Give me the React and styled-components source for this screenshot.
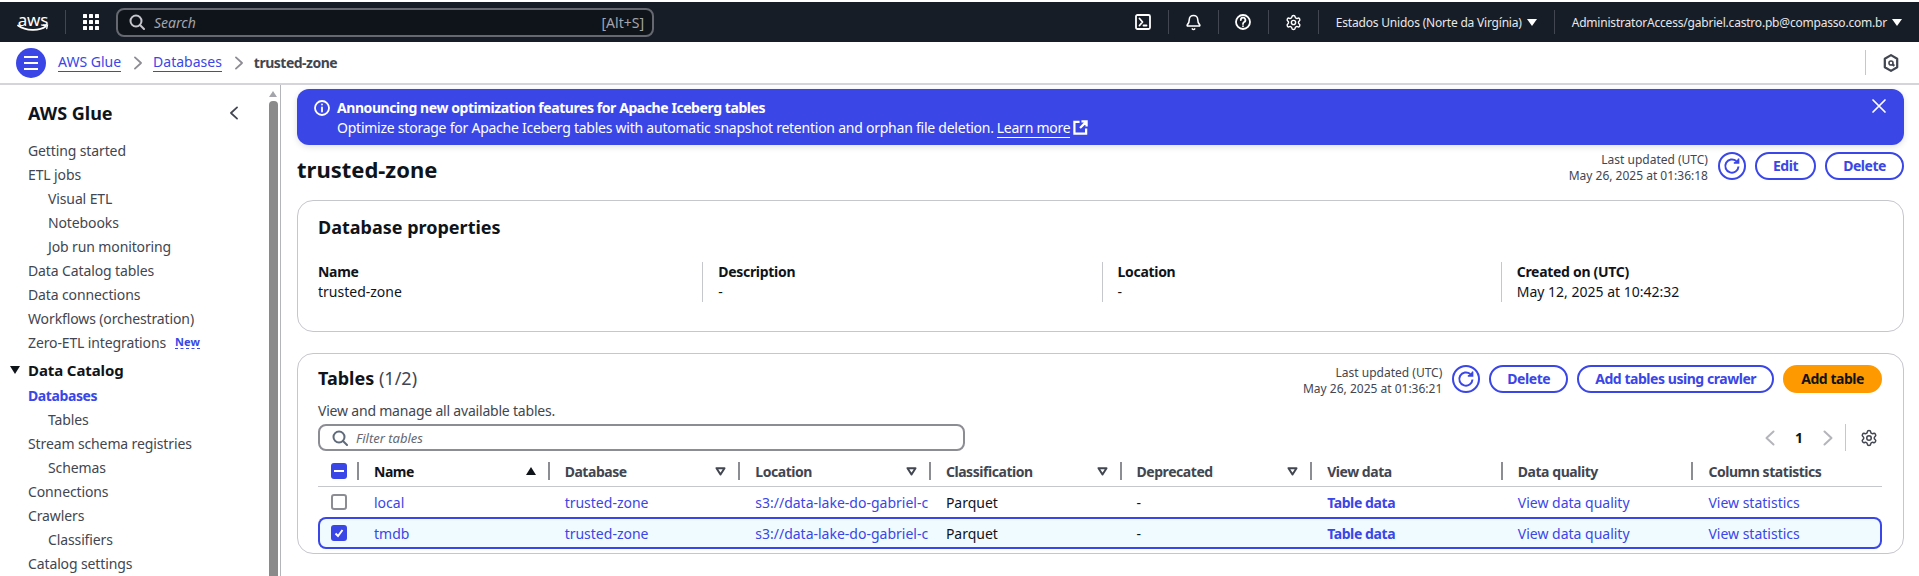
import React from 'react';
import styled, { createGlobalStyle } from 'styled-components';
import { Bell, Settings } from 'lucide-react';

const BLUE = '#3a46e6';
const TEXT = '#424650';
const DARK = '#0f141a';

const GlobalStyle = createGlobalStyle`
  html, body {
    margin: 0;
    height: 100%;
    overflow: hidden;
    background: #fff;
  }
  body {
    font-family: "Noto Sans", "Open Sans", sans-serif;
    font-size: 14px;
    color: ${DARK};
  }
`;

const Page = styled.div`
  display: flex;
  flex-direction: column;
  height: 100vh;
  overflow: hidden;
`;

const TopNav = styled.header`
  display: flex;
  align-items: center;
  flex: none;
  height: 40px;
  margin-top: 2px;
  padding-left: 17px;
  background: #161d26;
  color: #fff;
  box-sizing: border-box;
`;

const LogoBox = styled.div`
  position: relative;
  width: 32px;
  height: 22px;
  flex: none;
`;

const LogoText = styled.span`
  display: block;
  font-size: 17px;
  line-height: 17px;
  letter-spacing: -0.2px;
  text-align: center;
  color: #fff;
`;

const LogoSmile = styled.svg`
  position: absolute;
  left: 0;
  bottom: 0;
`;

const NavSep = styled.span`
  flex: none;
  width: 1px;
  height: 24px;
  background: #424650;
  margin: ${(p) => p.$margin || '0'};
`;

const GridIcon = styled.div`
  display: grid;
  grid-template-columns: repeat(3, 4px);
  gap: 2px;
  flex: none;
  margin-right: 17px;

  span {
    width: 4px;
    height: 4px;
    background: #fff;
    border-radius: 0.5px;
  }
`;

const SearchBox = styled.div`
  display: flex;
  align-items: center;
  flex: none;
  width: 538px;
  height: 29px;
  box-sizing: border-box;
  padding: 0 8px 0 11px;
  background: #0f141a;
  border: 2px solid #656871;
  border-radius: 8px;
  color: #c6c6cd;
  font-size: 14px;
`;

const SearchHint = styled.span`
  flex: 1;
  margin-left: 9px;
  font-style: italic;
  color: #a4a4ad;
`;

const SearchKeys = styled.span`
  color: #a4a4ad;
  font-size: 14px;
`;

const NavRight = styled.div`
  display: flex;
  align-items: center;
  margin-left: auto;
  padding-right: 17px;
`;

const NavIcon = styled.div`
  display: flex;
  align-items: center;
  justify-content: center;
  width: 49px;
  height: 24px;
  border-right: 1px solid #424650;
  color: #fff;
`;

const NavMenu = styled.div`
  display: flex;
  align-items: center;
  gap: 5px;
  height: 24px;
  padding-left: 17px;
  padding-right: ${(p) => (p.$last ? '0' : '17px')};
  font-size: 12px;
  letter-spacing: -0.2px;
  color: #e8e8ea;
  border-right: ${(p) => (p.$last ? '0' : '1px solid #424650')};
`;

const Caret = styled.span`
  width: 0;
  height: 0;
  border-left: 5px solid transparent;
  border-right: 5px solid transparent;
  border-top: 7px solid #fff;
  flex: none;
`;

const CrumbBar = styled.div`
  display: flex;
  align-items: center;
  flex: none;
  height: 43px;
  box-sizing: border-box;
  padding: 0 19px 0 16px;
  border-bottom: 2px solid #d4d4da;
`;

const MenuButton = styled.div`
  display: flex;
  flex-direction: column;
  align-items: center;
  justify-content: center;
  gap: 4px;
  width: 30px;
  height: 30px;
  border-radius: 50%;
  background: ${BLUE};
  margin-right: 12px;

  span {
    width: 14px;
    height: 2px;
    background: #fff;
  }
`;

const Crumb = styled.a`
  color: ${BLUE};
  font-size: 14px;
  text-decoration: none;
  border-bottom: 1px solid ${BLUE};
  line-height: 18px;
`;

const CrumbSep = styled.span`
  display: flex;
  margin: 0 8px 0 10px;
`;

const CrumbCurrent = styled.span`
  color: ${TEXT};
  font-weight: 700;
  font-size: 14px;
  letter-spacing: -0.5px;
`;

const CrumbTools = styled.div`
  display: flex;
  align-items: center;
  margin-left: auto;
  height: 25px;
  padding-left: 16px;
  border-left: 1px solid #c6c6cd;
  color: #424650;
`;

const Body = styled.div`
  display: flex;
  flex: 1;
  min-height: 0;
`;

const Sidebar = styled.aside`
  display: flex;
  flex: none;
  width: 281px;
  box-sizing: border-box;
  border-right: 1px solid #b4b4bb;
  padding-right: 2px;
  overflow: hidden;
`;

const SideContent = styled.nav`
  flex: 1;
  padding: 16px 27px 0 28px;
  min-width: 0;
`;

const SideTitleRow = styled.div`
  display: flex;
  align-items: center;
  justify-content: space-between;
  height: 24px;
  margin-bottom: 13px;
`;

const SideTitle = styled.h2`
  margin: 0;
  font-size: 18px;
  line-height: 24px;
  font-weight: 700;
`;

const SideList = styled.ul`
  margin: 0;
  padding: 0;
  list-style: none;
`;

const SideItem = styled.li`
  display: flex;
  align-items: center;
  height: 24px;
  padding-left: ${(p) => (p.$sub ? '20px' : '0')};
  color: ${(p) => (p.$active ? BLUE : TEXT)};
  font-weight: ${(p) => (p.$active ? 700 : 400)};
  font-size: 14px;
  letter-spacing: ${(p) => (p.$active ? '-0.4px' : '-0.12px')};
  white-space: nowrap;
`;

const SideSection = styled.li`
  position: relative;
  display: flex;
  align-items: center;
  height: 29px;
  padding-top: 3px;
  box-sizing: border-box;
  font-size: 15px;
  letter-spacing: -0.1px;
  font-weight: 700;
  color: ${DARK};
`;

const SectionCaret = styled.span`
  position: absolute;
  left: -18px;
  top: 12px;
  width: 0;
  height: 0;
  border-left: 5.5px solid transparent;
  border-right: 5.5px solid transparent;
  border-top: 8px solid ${DARK};
`;

const NewBadge = styled.span`
  margin-left: 9px;
  color: ${BLUE};
  font-size: 11px;
  font-weight: 700;
  border-bottom: 1px dashed ${BLUE};
  line-height: 13px;
  letter-spacing: 0;
`;

const ScrollTrack = styled.div`
  display: flex;
  flex-direction: column;
  align-items: center;
  flex: none;
  width: 10px;
  padding-top: 6px;
  gap: 4px;
`;

const ScrollArrow = styled.span`
  width: 0;
  height: 0;
  border-left: 4px solid transparent;
  border-right: 4px solid transparent;
  border-bottom: 6px solid #a4a4ad;
`;

const ScrollThumb = styled.div`
  flex: 1;
  width: 9px;
  background: #8a8a8a;
  border-radius: 4px 4px 0 0;
`;

const Main = styled.main`
  flex: 1;
  min-width: 0;
  padding: 4px 15px 0 16px;
`;

const Banner = styled.div`
  display: flex;
  align-items: flex-start;
  height: 56px;
  box-sizing: border-box;
  padding: 9px 17px;
  background: ${BLUE};
  color: #fff;
  border-radius: 12px;
  box-shadow: 0 2px 6px rgba(0, 7, 22, 0.12);
`;

const BannerIcon = styled.span`
  display: flex;
  margin: 2px 7px 0 0;
`;

const BannerText = styled.div`
  flex: 1;
  line-height: 20px;
  font-size: 14px;
  letter-spacing: -0.24px;
`;

const BannerTitle = styled.div`
  font-weight: 700;
  letter-spacing: -0.43px;
`;

const BannerLink = styled.a`
  color: #fff;
  text-decoration: none;
  border-bottom: 1px solid #fff;
  margin-left: 3px;
`;

const LinkIcon = styled.svg`
  margin-left: 3px;
  vertical-align: -2px;
`;

const PageHead = styled.div`
  display: flex;
  align-items: center;
  justify-content: space-between;
  margin-top: 9px;
  height: 28px;
`;

const PageTitle = styled.h1`
  margin: 2px 0 0;
  font-size: 22px;
  line-height: 28px;
  font-weight: 700;
`;

const Actions = styled.div`
  display: flex;
  align-items: flex-start;
  gap: 9px;
`;

const Updated = styled.div`
  text-align: right;
  font-size: 12px;
  line-height: 16px;
  color: ${TEXT};
  margin-right: 1px;
`;

const Button = styled.button`
  height: 28px;
  padding: 0 16px;
  box-sizing: border-box;
  border: 2px solid ${(p) => (p.$primary ? '#ff9900' : BLUE)};
  border-radius: 20px;
  background: ${(p) => (p.$primary ? '#ff9900' : '#fff')};
  color: ${(p) => (p.$primary ? DARK : BLUE)};
  font-family: inherit;
  font-size: 14px;
  font-weight: 700;
  letter-spacing: -0.45px;
  line-height: 1;
  white-space: nowrap;
`;

const RoundButton = styled(Button)`
  display: flex;
  align-items: center;
  justify-content: center;
  width: 28px;
  padding: 0;
  border-radius: 50%;
`;

const Panel = styled.section`
  border: 1px solid #c6c6cd;
  border-radius: 16px;
  box-sizing: border-box;
  margin-top: ${(p) => p.$top};
  height: ${(p) => p.$height};
  padding: ${(p) => p.$pad};
`;

const PanelTitle = styled.h2`
  margin: ${(p) => p.$top || '0'} 0 0;
  font-size: 18px;
  line-height: 24px;
  font-weight: 700;

  span {
    font-weight: 400;
    color: ${TEXT};
  }
`;

const PropGrid = styled.div`
  display: grid;
  grid-template-columns: repeat(4, 1fr);
  margin: 23px -18px 0 -15px;
`;

const PropCol = styled.div`
  padding-left: 15px;
  height: 40px;
  border-left: ${(p) => (p.$first ? '0' : '1px solid #c6c6cd')};
  font-size: 14px;
  line-height: 20px;
`;

const PropLabel = styled.div`
  font-weight: 700;
  letter-spacing: -0.3px;
`;

const TablesHead = styled.div`
  display: flex;
  align-items: flex-start;
  justify-content: space-between;
`;

const TableNote = styled.div`
  font-size: 14px;
  line-height: 20px;
  letter-spacing: -0.2px;
  color: ${TEXT};
  margin-top: 4px;
`;

const FilterRow = styled.div`
  display: flex;
  align-items: center;
  justify-content: space-between;
  margin-top: 3px;
`;

const FilterBox = styled.div`
  display: flex;
  align-items: center;
  width: 647px;
  height: 27px;
  box-sizing: border-box;
  padding-left: 12px;
  border: 2px solid #8c8c94;
  border-radius: 8px;
  color: #5f6b7a;
`;

const FilterHint = styled.span`
  margin-left: 8px;
  font-size: 13px;
  font-style: italic;
  color: #656871;
`;

const Pager = styled.div`
  display: flex;
  align-items: center;
  height: 27px;
`;

const PagerNum = styled.span`
  font-weight: 700;
  font-size: 14px;
  margin: 0 17px;
`;

const PagerTools = styled.div`
  display: flex;
  align-items: center;
  height: 27px;
  margin-left: 9px;
  padding: 0 4px 0 14px;
  border-left: 1px solid #c6c6cd;
  color: ${TEXT};
`;

const TableGrid = styled.div`
  margin-top: 5px;
`;

const Row = styled.div`
  display: grid;
  grid-template-columns: 39px repeat(8, 1fr);
  align-items: center;
  box-sizing: border-box;
  height: ${(p) => p.$height};
  ${(p) => p.$selected && `
    box-shadow: inset 0 0 0 2px ${BLUE};
    border-radius: 8px;
    background: #f0fbff;
  `}
  ${(p) => p.$header && 'border-bottom: 1px solid #c6c6cd;'}
`;

const CheckCell = styled.div`
  display: flex;
  padding-left: 13px;
`;

const Check = styled.span`
  display: flex;
  align-items: center;
  justify-content: center;
  width: 16px;
  height: 16px;
  box-sizing: border-box;
  border-radius: 3px;
  border: ${(p) => (p.$on ? 'none' : '2px solid #8c8c94')};
  background: ${(p) => (p.$on ? BLUE : '#fff')};
`;

const HeadCell = styled.div`
  display: flex;
  align-items: center;
  justify-content: space-between;
  height: 18px;
  padding: 0 12px 0 15px;
  border-left: 2px solid #8c8c94;
  font-size: 14px;
  font-weight: 700;
  letter-spacing: -0.45px;
  color: ${(p) => (p.$sorted ? DARK : TEXT)};
  box-sizing: border-box;
`;

const SortUp = styled.span`
  width: 0;
  height: 0;
  border-left: 5.5px solid transparent;
  border-right: 5.5px solid transparent;
  border-bottom: 8px solid ${DARK};
`;

const Cell = styled.div`
  padding-left: 17px;
  padding-right: 2px;
  font-size: 14px;
  white-space: nowrap;
  overflow: hidden;
  color: ${(p) => (p.$link ? BLUE : DARK)};
  font-weight: ${(p) => (p.$bold ? 700 : 400)};
  letter-spacing: ${(p) => (p.$bold ? '-0.4px' : '0')};
`;

const Svg = ({ size = 16, children, stroke = 'currentColor', width = 2 }) => (
  <svg width={size} height={size} viewBox="0 0 16 16" fill="none" stroke={stroke} strokeWidth={width} strokeLinecap="round" strokeLinejoin="round">
    {children}
  </svg>
);

const SearchIcon = () => (
  <Svg>
    <circle cx="7" cy="7" r="5.5" />
    <path d="M11 11l4 4" />
  </Svg>
);

const RefreshIcon = () => (
  <svg width="18" height="18" viewBox="0 0 18 18" fill="none" stroke={BLUE} strokeWidth="2">
    <path d="M15.5 9.5a6.6 6.6 0 1 1-2.2-5.4" />
    <path d="M15.6 1.5v4.6h-4.8" fill={BLUE} strokeWidth="1.5" />
  </svg>
);

const Chevron = ({ dir = 'right', color = 'currentColor', size = 16 }) => (
  <Svg stroke={color} size={size}>
    <path d={dir === 'right' ? 'M4.5 1.5l7 6.5-7 6.5' : 'M11.5 1.5L4.5 8l7 6.5'} />
  </Svg>
);

const FilterTriangle = () => (
  <svg width="11" height="9" viewBox="0 0 11 9" fill="none" stroke={TEXT} strokeWidth="2" strokeLinejoin="round">
    <path d="M1.5 1.2h8L5.5 7.5z" />
  </svg>
);

const sideTop = [
  ['Getting started'],
  ['ETL jobs'],
  ['Visual ETL', true],
  ['Notebooks', true],
  ['Job run monitoring', true],
  ['Data Catalog tables'],
  ['Data connections'],
  ['Workflows (orchestration)'],
];

const sideCatalog = [
  ['Tables', true],
  ['Stream schema registries'],
  ['Schemas', true],
  ['Connections'],
  ['Crawlers'],
  ['Classifiers', true],
  ['Catalog settings'],
];

const props = [
  ['Name', 'trusted-zone'],
  ['Description', '-'],
  ['Location', '-'],
  ['Created on (UTC)', 'May 12, 2025 at 10:42:32'],
];

const columns = ['Database', 'Location', 'Classification', 'Deprecated'];

const rows = [
  { name: 'local' },
  { name: 'tmdb', selected: true },
];

function App() {
  return (
    <Page>
      <GlobalStyle />
      <TopNav>
        <LogoBox>
          <LogoText>aws</LogoText>
          <LogoSmile width="32" height="9" viewBox="0 0 32 9" fill="none">
            <path d="M1 1.5c8 5.5 21 6 28 .8" stroke="#fff" strokeWidth="1.7" strokeLinecap="round" />
            <path d="M26.5 0.8l4 .2-.8 3.6" stroke="#fff" strokeWidth="1.3" strokeLinecap="round" />
          </LogoSmile>
        </LogoBox>
        <NavSep $margin="0 17px 0 16px" />
        <GridIcon>
          {Array.from({ length: 9 }, (_, i) => <span key={i} />)}
        </GridIcon>
        <SearchBox>
          <SearchIcon />
          <SearchHint>Search</SearchHint>
          <SearchKeys>[Alt+S]</SearchKeys>
        </SearchBox>
        <NavRight>
          <NavIcon>
            <Svg width={1.8}>
              <rect x="1" y="1" width="14" height="14" rx="1.5" />
              <path d="M4.5 4.5L7.5 8l-3 3.5M8.5 11.5h3" />
            </Svg>
          </NavIcon>
          <NavIcon>
            <Bell size={17} strokeWidth={2.2} />
          </NavIcon>
          <NavIcon>
            <Svg width={1.8}>
              <circle cx="8" cy="8" r="7" />
              <path d="M5.8 6a2.3 2.3 0 1 1 3.4 2C8.4 8.5 8 9 8 10" />
              <path d="M8 12.2v.1" />
            </Svg>
          </NavIcon>
          <NavIcon>
            <Settings size={17} strokeWidth={2} />
          </NavIcon>
          <NavMenu>Estados Unidos (Norte da Virgínia) <Caret /></NavMenu>
          <NavMenu $last>AdministratorAccess/gabriel.castro.pb@compasso.com.br <Caret /></NavMenu>
        </NavRight>
      </TopNav>

      <CrumbBar>
        <MenuButton><span /><span /><span /></MenuButton>
        <Crumb>AWS Glue</Crumb>
        <CrumbSep><Chevron color="#8c8c94" size={14} /></CrumbSep>
        <Crumb>Databases</Crumb>
        <CrumbSep><Chevron color="#8c8c94" size={14} /></CrumbSep>
        <CrumbCurrent>trusted-zone</CrumbCurrent>
        <CrumbTools>
          <svg width="18" height="18" viewBox="0 0 16 16" fill="none" stroke="currentColor" strokeWidth="2" strokeLinejoin="round">
            <path d="M8 1l5.5 3.2v7.6L8 15l-5.5-3.2V4.2z" />
            <circle cx="8" cy="8" r="1.8" strokeWidth="1.4" />
            <path d="M9 9l2 1.5" />
          </svg>
        </CrumbTools>
      </CrumbBar>

      <Body>
        <Sidebar>
          <SideContent>
            <SideTitleRow>
              <SideTitle>AWS Glue</SideTitle>
              <Chevron dir="left" color={TEXT} size={14} />
            </SideTitleRow>
            <SideList>
              {sideTop.map(([label, sub]) => <SideItem key={label} $sub={sub}>{label}</SideItem>)}
              <SideItem>Zero-ETL integrations <NewBadge>New</NewBadge></SideItem>
              <SideSection><SectionCaret />Data Catalog</SideSection>
              <SideItem $active>Databases</SideItem>
              {sideCatalog.map(([label, sub]) => <SideItem key={label} $sub={sub}>{label}</SideItem>)}
            </SideList>
          </SideContent>
          <ScrollTrack>
            <ScrollArrow />
            <ScrollThumb />
          </ScrollTrack>
        </Sidebar>

        <Main>
          <Banner>
            <BannerIcon>
              <Svg width={1.8}>
                <circle cx="8" cy="8" r="7" />
                <path d="M8 7.5v4M8 4.5v.1" />
              </Svg>
            </BannerIcon>
            <BannerText>
              <BannerTitle>Announcing new optimization features for Apache Iceberg tables</BannerTitle>
              Optimize storage for Apache Iceberg tables with automatic snapshot retention and orphan file deletion.
              <BannerLink>Learn more</BannerLink>
              <LinkIcon width="15" height="15" viewBox="0 0 16 16" fill="none" stroke="#fff" strokeWidth="2.4">
                <path d="M7 2H1.5v12.5H14V9M9 1.5h5.5V7M14 2L7.5 8.5" />
              </LinkIcon>
            </BannerText>
            <Svg width={1.7}>
              <path d="M2 2l12 12M14 2L2 14" />
            </Svg>
          </Banner>

          <PageHead>
            <PageTitle>trusted-zone</PageTitle>
            <Actions>
              <Updated>Last updated (UTC)<br />May 26, 2025 at 01:36:18</Updated>
              <RoundButton><RefreshIcon /></RoundButton>
              <Button>Edit</Button>
              <Button>Delete</Button>
            </Actions>
          </PageHead>

          <Panel $top="18px" $height="132px" $pad="14px 21px 14px 20px">
            <PanelTitle>Database properties</PanelTitle>
            <PropGrid>
              {props.map(([label, value], i) => (
                <PropCol key={label} $first={i === 0}>
                  <PropLabel>{label}</PropLabel>
                  {value}
                </PropCol>
              ))}
            </PropGrid>
          </Panel>

          <Panel $top="21px" $height="201px" $pad="11px 21px 0 20px">
            <TablesHead>
              <PanelTitle $top="1px">Tables <span>(1/2)</span></PanelTitle>
              <Actions>
                <Updated>Last updated (UTC)<br />May 26, 2025 at 01:36:21</Updated>
                <RoundButton><RefreshIcon /></RoundButton>
                <Button>Delete</Button>
                <Button>Add tables using crawler</Button>
                <Button $primary>Add table</Button>
              </Actions>
            </TablesHead>
            <TableNote>View and manage all available tables.</TableNote>
            <FilterRow>
              <FilterBox>
                <SearchIcon />
                <FilterHint>Filter tables</FilterHint>
              </FilterBox>
              <Pager>
                <Chevron dir="left" color="#b4b4bb" />
                <PagerNum>1</PagerNum>
                <Chevron color="#b4b4bb" />
                <PagerTools><Settings size={18} strokeWidth={2} /></PagerTools>
              </Pager>
            </FilterRow>
            <TableGrid>
              <Row $height="31px" $header>
                <CheckCell>
                  <Check $on>
                    <svg width="10" height="2" viewBox="0 0 10 2"><path d="M0 1h10" stroke="#fff" strokeWidth="2" /></svg>
                  </Check>
                </CheckCell>
                <HeadCell $sorted>Name <SortUp /></HeadCell>
                {columns.map((c) => <HeadCell key={c}>{c} <FilterTriangle /></HeadCell>)}
                <HeadCell>View data</HeadCell>
                <HeadCell>Data quality</HeadCell>
                <HeadCell>Column statistics</HeadCell>
              </Row>
              {rows.map((r) => (
                <Row key={r.name} $height={r.selected ? '32px' : '30px'} $selected={r.selected}>
                  <CheckCell>
                    <Check $on={r.selected}>
                      {r.selected && (
                        <svg width="12" height="12" viewBox="0 0 12 12" fill="none">
                          <path d="M2.5 6.5l2.5 2.5 4.5-6" stroke="#fff" strokeWidth="2" />
                        </svg>
                      )}
                    </Check>
                  </CheckCell>
                  <Cell $link>{r.name}</Cell>
                  <Cell $link>trusted-zone</Cell>
                  <Cell $link>s3://data-lake-do-gabriel-c</Cell>
                  <Cell>Parquet</Cell>
                  <Cell>-</Cell>
                  <Cell $link $bold>Table data</Cell>
                  <Cell $link>View data quality</Cell>
                  <Cell $link>View statistics</Cell>
                </Row>
              ))}
            </TableGrid>
          </Panel>
        </Main>
      </Body>
    </Page>
  );
}

export default App;
